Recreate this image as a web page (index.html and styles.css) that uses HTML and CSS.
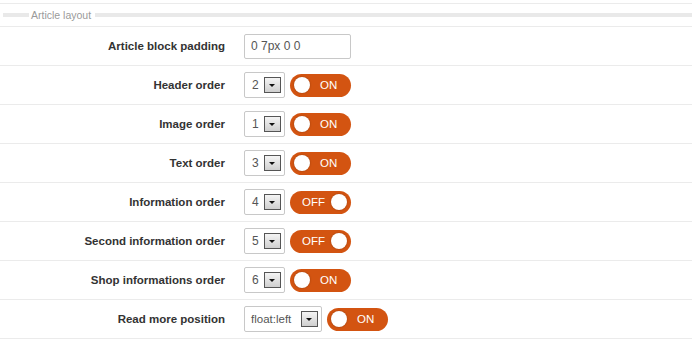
FILE: index.html
```html
<!DOCTYPE html>
<html>
  <head>
    <title>Article layout</title>
    <link rel="stylesheet" href="styles.css">
  </head>
  <body>
    <div class="panel">
      <div class="legend">
        <span class="band band-short"></span>
        <span class="legend-text">Article layout</span>
        <span class="band band-long"></span>
      </div>
      <div class="row">
        <label class="label">Article block padding</label>
        <div class="controls">
          <input class="text-input" type="text" value="0 7px 0 0">
        </div>
      </div>
      <div class="row">
        <label class="label">Header order</label>
        <div class="controls">
          <div class="select"><span class="select-value">2</span><span class="select-btn"></span></div>
          <div class="toggle on"><span class="knob"></span><span class="toggle-text">ON</span></div>
        </div>
      </div>
      <div class="row">
        <label class="label">Image order</label>
        <div class="controls">
          <div class="select"><span class="select-value">1</span><span class="select-btn"></span></div>
          <div class="toggle on"><span class="knob"></span><span class="toggle-text">ON</span></div>
        </div>
      </div>
      <div class="row">
        <label class="label">Text order</label>
        <div class="controls">
          <div class="select"><span class="select-value">3</span><span class="select-btn"></span></div>
          <div class="toggle on"><span class="knob"></span><span class="toggle-text">ON</span></div>
        </div>
      </div>
      <div class="row">
        <label class="label">Information order</label>
        <div class="controls">
          <div class="select"><span class="select-value">4</span><span class="select-btn"></span></div>
          <div class="toggle off"><span class="toggle-text">OFF</span><span class="knob"></span></div>
        </div>
      </div>
      <div class="row">
        <label class="label">Second information order</label>
        <div class="controls">
          <div class="select"><span class="select-value">5</span><span class="select-btn"></span></div>
          <div class="toggle off"><span class="toggle-text">OFF</span><span class="knob"></span></div>
        </div>
      </div>
      <div class="row">
        <label class="label">Shop informations order</label>
        <div class="controls">
          <div class="select"><span class="select-value">6</span><span class="select-btn"></span></div>
          <div class="toggle on"><span class="knob"></span><span class="toggle-text">ON</span></div>
        </div>
      </div>
      <div class="row">
        <label class="label">Read more position</label>
        <div class="controls">
          <div class="select select-wide"><span class="select-value">float:left</span><span class="select-btn"></span></div>
          <div class="toggle on"><span class="knob"></span><span class="toggle-text">ON</span></div>
        </div>
      </div>
    </div>
  </body>
</html>
```

FILE: styles.css
```css
body {
  margin: 0;
  padding-top: 3px;
  background: #fff;
  font-family: "Liberation Sans", Arial, sans-serif;
  color: #333;
}
.panel {
  width: 692px;
  border-top: 1px solid #ebebeb;
}
.legend {
  display: flex;
  align-items: center;
  height: 22px;
  border-bottom: 1px solid #ebebeb;
}
.band {
  height: 4px;
  background: #e9e9e9;
}
.band-short {
  width: 26px;
  margin-left: 3px;
}
.band-long {
  flex-grow: 1;
}
.legend-text {
  padding: 0 4px 0 2px;
  font-size: 10.5px;
  color: #9a9a9a;
}
.row {
  display: flex;
  align-items: center;
  height: 38px;
  border-bottom: 1px solid #ebebeb;
}
.label {
  width: 225px;
  margin-top: -1px;
  text-align: right;
  font-size: 11.5px;
  font-weight: bold;
  color: #333;
}
.controls {
  display: flex;
  align-items: center;
  gap: 5px;
  margin-left: 19px;
}
.text-input {
  box-sizing: border-box;
  width: 107px;
  height: 25px;
  margin: 0;
  padding: 0 6px;
  border: 1px solid #c8c8c8;
  border-radius: 2px;
  font-family: inherit;
  font-size: 12px;
  color: #555;
}
.select {
  box-sizing: border-box;
  display: flex;
  align-items: center;
  justify-content: space-between;
  width: 41px;
  height: 26px;
  padding: 0 3px 0 7px;
  border: 1px solid #c8c8c8;
  border-radius: 2px;
  font-size: 12px;
  color: #555;
}
.select-wide {
  width: 78px;
  padding-left: 6px;
  font-size: 11.5px;
}
.select-btn {
  position: relative;
  box-sizing: border-box;
  width: 17px;
  height: 16px;
  border: 1px solid #555;
  background: linear-gradient(#f4f4f4, #cfcfcf);
}
.select-btn::after {
  content: "";
  position: absolute;
  left: 4px;
  top: 6px;
  border-left: 3px solid transparent;
  border-right: 3px solid transparent;
  border-top: 3px solid #111;
}
.toggle {
  box-sizing: border-box;
  display: flex;
  align-items: center;
  width: 61px;
  height: 23px;
  padding: 0 4px;
  border-radius: 12px;
  background: #d35411;
  color: #fff;
  font-size: 11.5px;
}
.knob {
  width: 16px;
  height: 16px;
  border-radius: 50%;
  background: #fff;
  box-shadow: 0 0 2px rgba(0, 0, 0, 0.3);
}
.toggle.on .toggle-text {
  margin-left: 10px;
}
.toggle.off {
  justify-content: space-between;
}
.toggle.off .toggle-text {
  margin-left: 8px;
}
```
